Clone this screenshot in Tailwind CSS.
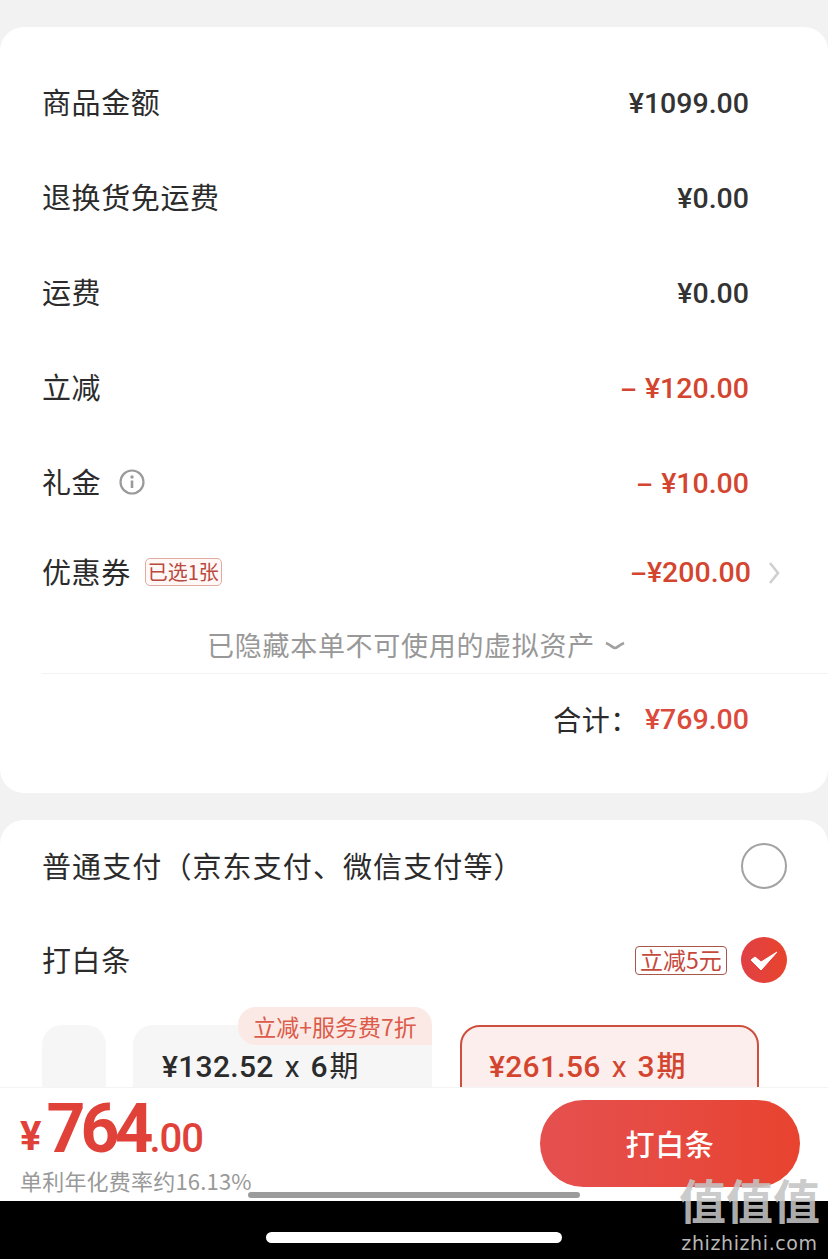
<!DOCTYPE html>
<html lang="zh-CN">
<head>
  <meta charset="UTF-8" />
  <title>打白条</title>
  <script src="https://cdn.jsdelivr.net/npm/@tailwindcss/browser@4"></script>
</head>
<body class="relative w-[828px] h-[1259px] overflow-hidden bg-black font-['Noto_Sans_CJK_SC',sans-serif] text-[#2b2b2b]">
  <main class="h-[1087px] overflow-hidden bg-[#f2f2f2] pt-[27px]">
    <!-- price breakdown -->
    <section class="h-[766px] rounded-[24px] bg-white pt-[29px] pl-[42px]">
      <div class="h-[95px] flex items-center justify-between pr-[79px] text-[29px] tracking-[0.6px]">
        <span class="pb-[3px]">商品金额</span>
        <span class="pt-[2px] font-['Roboto',sans-serif] font-medium text-[28.500px] tracking-normal text-[#333]">¥1099.00</span>
      </div>
      <div class="h-[95px] flex items-center justify-between pr-[79px] text-[29px] tracking-[0.6px]">
        <span class="pb-[3px]">退换货免运费</span>
        <span class="pt-[2px] font-['Roboto',sans-serif] font-medium text-[28.500px] tracking-normal text-[#333]">¥0.00</span>
      </div>
      <div class="h-[95px] flex items-center justify-between pr-[79px] text-[29px] tracking-[0.6px]">
        <span class="pb-[3px]">运费</span>
        <span class="pt-[2px] font-['Roboto',sans-serif] font-medium text-[28.500px] tracking-normal text-[#333]">¥0.00</span>
      </div>
      <div class="h-[95px] flex items-center justify-between pr-[79px] text-[29px] tracking-[0.6px]">
        <span class="pb-[3px]">立减</span>
        <span class="pt-[2px] font-['Roboto',sans-serif] font-medium text-[28.500px] tracking-normal text-[#d4452f]"><span class="inline-block origin-left scale-x-[1.8] mr-[15px]">-</span>¥120.00</span>
      </div>
      <div class="h-[95px] flex items-center justify-between pr-[79px] text-[29px] tracking-[0.6px]">
        <span class="pb-[3px] flex items-center gap-[18px]">
          礼金
          <svg class="w-[26px] h-[26px]" viewBox="0 0 26 26" fill="none">
            <circle cx="13" cy="13" r="11.5" stroke="#9a9a9a" stroke-width="2.2" />
            <circle cx="13" cy="8" r="1.7" fill="#9a9a9a" />
            <path d="M13 11.500v7.500" stroke="#9a9a9a" stroke-width="2.6" />
          </svg>
        </span>
        <span class="pt-[2px] font-['Roboto',sans-serif] font-medium text-[28.500px] tracking-normal text-[#d4452f]"><span class="inline-block origin-left scale-x-[1.8] mr-[15px]">-</span>¥10.00</span>
      </div>
      <div class="h-[83px] flex items-center justify-between pr-[48px] text-[29px] tracking-[0.6px]">
        <span class="pb-[2px] flex items-center gap-[14px]">
          优惠券
          <span class="h-[28px] w-[77px] flex items-center justify-center rounded-[5px] border border-[#e2ab9f] bg-[#fff8f6] text-[20px] leading-none tracking-normal text-[#b9483f]">已选1张</span>
        </span>
        <span class="flex items-center gap-[17px]">
          <span class="pt-[1px] font-['Roboto',sans-serif] font-medium text-[28.500px] tracking-normal text-[#d4452f]"><span class="inline-block origin-left scale-x-[1.8] mr-[7px]">-</span>¥200.00</span>
          <svg class="w-[12px] h-[24px]" viewBox="0 0 12 24" fill="none">
            <path d="M2 2l8 10-8 10" stroke="#cfcfcf" stroke-width="2.6" />
          </svg>
        </span>
      </div>
      <div class="h-[60px] flex items-center justify-center gap-[10px] pr-[38px] pt-[4px] border-b border-[#f3f3f3] text-[27px] tracking-[0.7px] text-[#989898]">
        <span>已隐藏本单不可使用的虚拟资产</span>
        <svg class="w-[20px] h-[10px]" viewBox="0 0 20 10" fill="none">
          <path d="M1 2c5 2 7 5 9 5s4-3 9-5" stroke="#a0a0a0" stroke-width="2.6" />
        </svg>
      </div>
      <div class="h-[90px] flex items-center justify-end gap-[6px] pr-[79px]">
        <span class="pb-[1px] text-[28px] tracking-[0.6px]">合计&#xFF1A;</span>
        <span class="pt-[2px] font-['Roboto',sans-serif] font-medium text-[28.500px] text-[#dc4a3c]">¥769.00</span>
      </div>
    </section>

    <!-- payment options -->
    <section class="mt-[27px] rounded-t-[24px] bg-white pl-[42px] h-[300px]">
      <div class="h-[92px] flex items-center justify-between pr-[41px] text-[29px] tracking-[0.6px]">
        <span class="tracking-[1.100px]">普通支付&#xFF08;京东支付、微信支付等&#xFF09;</span>
        <span class="w-[46px] h-[46px] rounded-full border-2 border-[#a2a2a2]"></span>
      </div>
      <div class="h-[96px] flex items-center justify-between pr-[41px] text-[29px] tracking-[0.6px]">
        <span>打白条</span>
        <span class="flex items-center gap-[14px]">
          <span class="h-[29px] w-[92px] pb-[2px] flex items-center justify-center rounded-[4px] border border-[#a8574b] text-[23px] leading-none tracking-normal text-[#c4493a]">立减5元</span>
          <span class="w-[46px] h-[46px] rounded-full bg-linear-to-r from-[#e04044] to-[#e8442c] flex items-center justify-center">
            <svg class="w-[28px] h-[22px]" viewBox="0 0 28 22" fill="none">
              <path d="M1 11l4-3 6 5L27 3 11 21z" fill="#fff" stroke="#fff" stroke-width="1" stroke-linejoin="round" />
            </svg>
          </span>
        </span>
      </div>
      <div class="flex items-start pt-[17px]">
        <div class="w-[64px] h-[90px] rounded-[20px] bg-[#f6f6f6]"></div>
        <div class="relative ml-[27px] w-[299px] h-[90px] rounded-[20px] bg-[#f6f6f6] pl-[29px] pt-[16px] flex items-baseline gap-[11px] text-[29px] leading-[46px]">
          <span class="absolute right-0 -top-[18px] w-[194px] h-[38px] rounded-t-[18px] rounded-bl-[18px] bg-[#fbe9e5] flex items-center justify-center text-[23px] font-normal leading-none text-[#dc5b4a]">立减+服务费7折</span>
          <span class="font-['Roboto',sans-serif] font-medium text-[30px] tracking-[0.3px]">¥132.52</span>
          <span class="font-['Roboto',sans-serif] text-[30px]">x</span>
          <span><span class="font-['Roboto',sans-serif] font-medium text-[30px] mr-[2px]">6</span>期</span>
        </div>
        <div class="ml-[28px] w-[299px] h-[90px] rounded-[20px] border-[2.500px] border-[#cf4f3e] bg-[#fbeeec] pl-[27px] pt-[14px] flex items-baseline gap-[11px] text-[29px] leading-[46px] text-[#d4452f]">
          <span class="font-['Roboto',sans-serif] font-medium text-[30px] tracking-[0.3px]">¥261.56</span>
          <span class="font-['Roboto',sans-serif] text-[30px]">x</span>
          <span class="font-medium"><span class="font-['Roboto',sans-serif] text-[30px] mr-[2px]">3</span>期</span>
        </div>
      </div>
    </section>
  </main>

  <!-- checkout bar -->
  <footer class="h-[114px] bg-white border-t border-[#f4f4f4] flex items-start justify-between pl-[20px] pr-[28px]">
    <div>
      <div class="h-[74px] pt-[4px] flex items-baseline font-['Roboto',sans-serif] font-bold text-[#e0423a]">
        <span class="text-[40px] leading-[74px] mr-[5px] -translate-y-[2px]">¥</span>
        <span class="text-[68px] leading-[74px] tracking-[-5px]">764</span>
        <span class="text-[40px] leading-[74px] font-medium tracking-[-1px] ml-[1px]">.00</span>
      </div>
      <div class="pt-[5px] text-[22px] leading-[26px] tracking-[0.2px] text-[#999] whitespace-nowrap">单利年化费率约16.13%</div>
    </div>
    <button class="mt-[12px] w-[260px] h-[87px] rounded-full bg-linear-to-r from-[#e5504f] to-[#e8432f] text-white text-[29px] font-medium tracking-[0.6px]">打白条</button>
  </footer>

  <!-- home indicator -->
  <div class="h-[58px] bg-black flex justify-center pt-[31px]">
    <div class="w-[296px] h-[11px] rounded-full bg-white"></div>
  </div>

  <!-- scrollbar, watermark -->
  <div class="absolute left-[248px] top-[1192px] w-[332px] h-[6px] rounded-full bg-[#9b9b9b]"></div>
  <div class="absolute left-[677px] top-[1175px] w-[145px] text-center text-[#c4c4c4]/90 leading-none">
    <div class="text-[47px] font-bold whitespace-nowrap">值值值</div>
    <div class="font-['DejaVu_Sans',sans-serif] text-[19px] mt-[12px] tracking-[0.6px] text-[#b8b8b8]">zhizhizhi.com</div>
  </div>
</body>
</html>
